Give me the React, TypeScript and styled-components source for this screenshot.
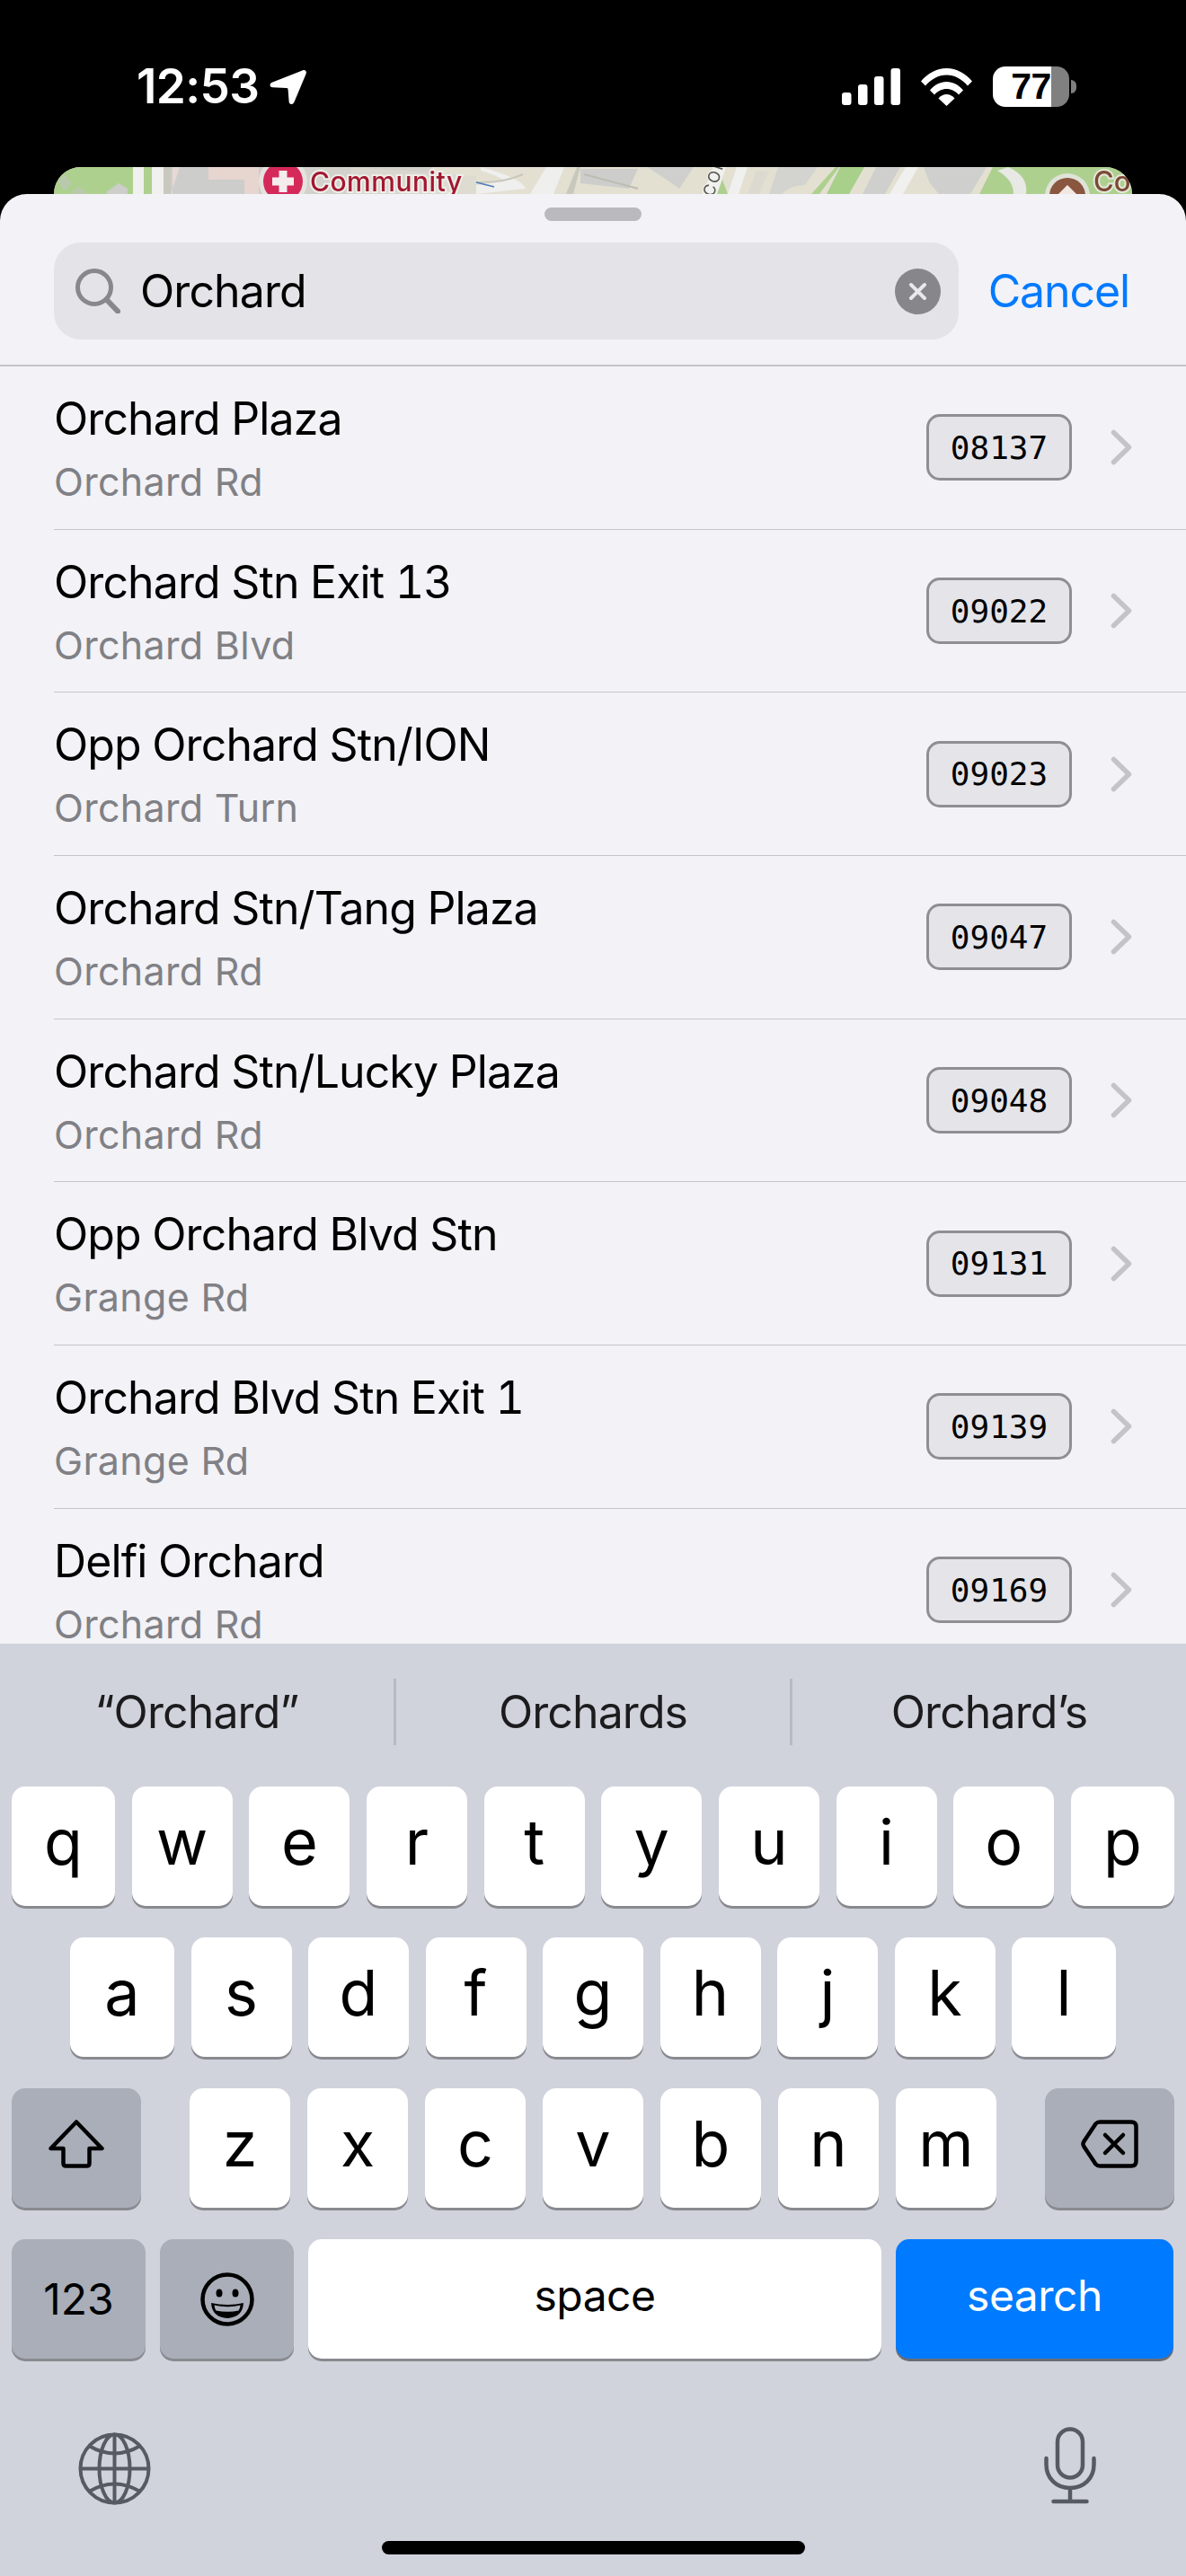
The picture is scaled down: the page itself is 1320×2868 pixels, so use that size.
import React from 'react'
import styled, { createGlobalStyle } from 'styled-components'

const GlobalStyle = createGlobalStyle`
  html, body {
    margin: 0;
    padding: 0;
    background: #000;
  }
  * {
    box-sizing: border-box;
  }
`

const FONT = `Inter, "Noto Sans", sans-serif`

const Page = styled.div`
  width: 1320px;
  height: 2868px;
  background: #000;
  display: flex;
  flex-direction: column;
  overflow: hidden;
  font-family: ${FONT};
`

/* status bar */
const StatusBar = styled.div`
  height: 186px;
  flex: none;
  display: flex;
  justify-content: space-between;
  align-items: flex-start;
  padding: 74px 130px 0 152px;
  color: #fff;
`

const TimeGroup = styled.div`
  display: flex;
  align-items: center;
  gap: 12px;
  height: 45px;
`

const Time = styled.span`
  font-size: 53px;
  line-height: 45px;
  font-weight: 600;
  letter-spacing: -0.6px;
`

const StatusIcons = styled.div`
  display: flex;
  align-items: center;
  gap: 23px;
  height: 45px;
`

const Battery = styled.div`
  position: relative;
  width: 85px;
  height: 45px;
  border-radius: 14px;
  background: linear-gradient(90deg, #fff 0, #fff 65px, #808080 65px);
  color: #000;
  display: flex;
  align-items: center;
  justify-content: center;
  font-family: 'Liberation Sans', sans-serif;
  font-size: 41px;
  font-weight: 700;
  letter-spacing: -0.5px;

  &::after {
    content: '';
    position: absolute;
    right: -8px;
    top: 15px;
    width: 6px;
    height: 15px;
    background: #808080;
    border-radius: 0 8px 8px 0;
  }
`

/* map card peeking from behind the sheet */
const MapPeek = styled.div`
  height: 30px;
  flex: none;
  margin: 0 60px;
  border-radius: 30px 30px 0 0;
  overflow: hidden;
  background: #e3e0d2;

  svg {
    display: block;
    filter: blur(0.5px);
  }
`

/* sheet */
const Sheet = styled.div`
  flex: 1;
  min-height: 0;
  display: flex;
  flex-direction: column;
  background: #f2f2f7;
  border-radius: 30px 30px 0 0;
  overflow: hidden;
`

const SheetHeader = styled.div`
  height: 192px;
  flex: none;
  display: flex;
  flex-direction: column;
  align-items: center;
  padding-top: 15px;
  border-bottom: 2px solid #c4c4c8;
`

const Handle = styled.div`
  width: 108px;
  height: 15px;
  border-radius: 8px;
  background: #b9b9be;
`

const SearchRow = styled.div`
  width: 100%;
  display: flex;
  align-items: center;
  padding: 24px 63px 0 60px;
  justify-content: space-between;
`

const SearchField = styled.div`
  width: 1007px;
  height: 108px;
  border-radius: 30px;
  background: #e3e3e8;
  display: flex;
  align-items: center;
  padding: 0 20px 0 24px;
  gap: 22px;
`

const SearchText = styled.div`
  flex: 1;
  font-size: 50px;
  letter-spacing: -0.9px;
  color: #000;
`

const ClearButton = styled.div`
  width: 51px;
  height: 51px;
  border-radius: 50%;
  background: #86868b;
  display: flex;
  align-items: center;
  justify-content: center;
`

const CancelLabel = styled.div`
  font-size: 50px;
  letter-spacing: -1.1px;
  color: #007aff;
`

const StopList = styled.div`
  flex: 1;
  min-height: 0;
  overflow: hidden;
`

const Row = styled.div`
  height: 181.7px;
  margin-left: 60px;
  padding-right: 60px;
  display: flex;
  align-items: center;
  border-bottom: 1.5px solid #c6c6ca;
`

const RowText = styled.div`
  flex: 1;
  min-width: 0;
`

const Title = styled.div`
  font-size: 50px;
  line-height: 60px;
  letter-spacing: -0.9px;
  font-feature-settings: 'tnum';
  color: #000;
`

const Subtitle = styled.div`
  margin-top: 15px;
  font-size: 43px;
  line-height: 50px;
  letter-spacing: 0.3px;
  color: #808085;
`

const CodeBadge = styled.div`
  width: 162px;
  height: 74px;
  border: 3px solid #8e8e93;
  border-radius: 15px;
  background: #e4e4e9;
  display: flex;
  align-items: center;
  justify-content: center;
  font-family: 'DejaVu Sans Mono', monospace;
  font-size: 36px;
  color: #000;
  margin-right: 43px;
`

/* keyboard */
const Keyboard = styled.div`
  height: 1038px;
  flex: none;
  background: #d0d3dc;
  display: flex;
  flex-direction: column;
`

const Suggestions = styled.div`
  height: 159px;
  flex: none;
  display: flex;
  align-items: flex-start;
  padding-top: 39px;
`

const Suggestion = styled.div`
  flex: 1;
  height: 74px;
  display: flex;
  align-items: center;
  justify-content: center;
  font-size: 50px;
  letter-spacing: -0.9px;
  color: #1c1c1e;
`

const SuggestionDivider = styled.div`
  width: 3px;
  height: 74px;
  background: #b8bac1;
`

const KeyRows = styled.div`
  display: flex;
  flex-direction: column;
  gap: 35px;
`

const KeyRow = styled.div<{ $inset: number }>`
  display: flex;
  justify-content: space-between;
  padding: 0 ${({ $inset }) => $inset}px;
  height: 133px;
`

const KeyGroup = styled.div`
  display: flex;
  gap: 19px;
`

const BottomKeys = styled.div`
  display: flex;
  gap: 16px;
  padding: 0 13px;
  height: 133px;
`

type KeyTone = 'letter' | 'special' | 'action'

const toneBackground: Record<KeyTone, string> = {
  letter: '#fff',
  special: '#a9aeb9',
  action: '#007aff',
}

const Key = styled.div<{ $width?: number; $tone?: KeyTone; $small?: boolean }>`
  width: ${({ $width }) => $width ?? 112}px;
  height: 133px;
  flex: none;
  border-radius: 15px;
  background: ${({ $tone }) => toneBackground[$tone ?? 'letter']};
  box-shadow: 0 3px 0 ${({ $tone }) => ($tone === 'action' ? '#6c6d74' : '#898a8f')};
  color: ${({ $tone }) => ($tone === 'action' ? '#fff' : '#000')};
  display: flex;
  align-items: center;
  justify-content: center;
  font-size: ${({ $small }) => ($small ? 48 : 70)}px;
  padding-bottom: ${({ $small }) => ($small ? 0 : 10)}px;
`

const KeyLabel = styled.span`
  display: block;
  margin-top: -9px;
  letter-spacing: -0.5px;
`

const SystemRow = styled.div`
  display: flex;
  justify-content: space-between;
  align-items: flex-start;
  padding: 76px 100px 0 87px;
  height: 203px;
`

const GlobeSlot = styled.div`
  padding-top: 6px;
`

const HomeBar = styled.div`
  width: 471px;
  height: 15px;
  margin: 0 auto;
  border-radius: 8px;
  background: #000;
`

/* drawings */
const SignalIcon = () => (
  <svg width="65" height="41" viewBox="0 0 65 41" fill="#fff">
    <rect x="0" y="27" width="10.5" height="14" rx="3" />
    <rect x="18" y="18" width="10.5" height="23" rx="3" />
    <rect x="36" y="9" width="10.5" height="32" rx="3" />
    <rect x="54.5" y="0" width="10.5" height="41" rx="3" />
  </svg>
)

const WifiIcon = () => (
  <svg width="57" height="42" viewBox="0 0 57 42" fill="#fff">
    <path d="M0 14.5C7.5 5.5 17.5 0 28.5 0S49.5 5.5 57 14.5L52 19.5C45.5 12 37.5 7.5 28.5 7.5S11.5 12 5 19.5Z" />
    <path d="M10 24.5C15 18.5 21.5 15 28.5 15S42 18.5 47 24.5L42 29.5C38.5 25.5 33.5 23 28.5 23S18.5 25.5 15 29.5Z" />
    <path d="M19.5 33.5C22 30.5 25 29 28.5 29S35 30.5 37.5 33.5L28.5 42Z" />
  </svg>
)

const LocationIcon = () => (
  <svg width="42" height="40" viewBox="0 0 42 40" fill="#fff">
    <path d="M36.5 1.5C39.5 0 41.8 2.3 40.5 5.5L27.5 36.5C26 40 21.8 40 21.6 36L20.6 22.8C20.5 21.5 20 21 18.6 21L3.5 20.2C0 20 -.5 16.2 2.8 14.8Z" />
  </svg>
)

const SearchGlyph = () => (
  <svg width="50" height="50" viewBox="0 0 50 50" fill="none" stroke="#87878c" strokeWidth="5" strokeLinecap="round">
    <circle cx="21" cy="21" r="18.5" />
    <path d="M34.5 34.5L47 47.5" strokeWidth="6" />
  </svg>
)

const ClearGlyph = () => (
  <svg width="21" height="21" viewBox="0 0 21 21" fill="none" stroke="#e9e9ed" strokeWidth="4" strokeLinecap="round">
    <path d="M3 3L18 18M18 3L3 18" />
  </svg>
)

const Chevron = () => (
  <svg width="24" height="40" viewBox="0 0 24 40" fill="none" stroke="#c4c4c8" strokeWidth="5.5" strokeLinecap="round" strokeLinejoin="round">
    <path d="M3.5 3.5L20.5 20L3.5 36.5" />
  </svg>
)

const ShiftIcon = () => (
  <svg width="62" height="54" viewBox="0 0 62 54" fill="none" stroke="#000" strokeWidth="4.5" strokeLinejoin="round">
    <path d="M31 2.5L59.5 32H45.5V48.5Q45.5 51.5 42.5 51.5H19.5Q16.5 51.5 16.5 48.5V32H2.5Z" />
  </svg>
)

const BackspaceIcon = () => (
  <svg width="64" height="54" viewBox="0 0 64 54" fill="none" stroke="#000" strokeWidth="4.5" strokeLinejoin="round" strokeLinecap="round">
    <path d="M21 2.5H56Q61.5 2.5 61.5 8V46Q61.5 51.5 56 51.5H21Q18.5 51.5 16.5 49.5L3.5 30Q1.5 27 3.5 24L16.5 4.5Q18.5 2.5 21 2.5Z" />
    <path d="M27 17L47 37M47 17L27 37" />
  </svg>
)

const EmojiIcon = () => (
  <svg width="60" height="60" viewBox="0 0 60 60">
    <circle cx="30" cy="30" r="27.5" fill="none" stroke="#000" strokeWidth="4.5" />
    <ellipse cx="21" cy="23" rx="3.5" ry="4.5" fill="#000" />
    <ellipse cx="39" cy="23" rx="3.5" ry="4.5" fill="#000" />
    <path d="M12 34Q30 38 48 34Q47 50 30 51Q13 50 12 34Z" fill="#000" />
    <path d="M15.5 36.5Q30 40 44.5 36.5Q44 41 42.5 42.5Q30 45 17.5 42.5Q16 41 15.5 36.5Z" fill="#a9aeb9" />
  </svg>
)

const GlobeIcon = () => (
  <svg width="81" height="81" viewBox="0 0 81 81" fill="none" stroke="#565a63" strokeWidth="4">
    <circle cx="40.5" cy="40.5" r="38" />
    <ellipse cx="40.5" cy="40.5" rx="17" ry="38" />
    <path d="M40.5 2.5V78.5M2.5 40.5H78.5" />
    <path d="M12 15Q40.5 32 69 15M12 66Q40.5 49 69 66" />
  </svg>
)

const MicIcon = () => (
  <svg width="58" height="86" viewBox="0 0 58 86" fill="none" stroke="#565a63" strokeWidth="4.5" strokeLinecap="round">
    <rect x="15" y="2.5" width="28" height="54" rx="14" />
    <path d="M2.5 35V42C2.5 57 13.5 68 29 68S55.5 57 55.5 42V35" />
    <path d="M29 68V83M10.5 83H47.5" />
  </svg>
)

const MapDrawing = () => (
  <svg width="1200" height="30" viewBox="0 0 1200 30">
    <rect width="1200" height="30" fill="#e3e0d2" />
    {/* left park and roads */}
    <path d="M0 30V12Q4 0 24 0H88V30Z" fill="#aed08f" />
    <path d="M4 16L12 9L20 18L12 26Z" fill="#b9c9ae" />
    <path d="M20 27L28 22L36 28V30H22Z" fill="#b9c9ae" />
    <path d="M58 28L72 18L82 24V30H60Z" fill="#cdcdc9" />
    <rect x="88" width="12" height="30" fill="#f0f0ee" />
    <rect x="100" width="9" height="30" fill="#aed08f" />
    <rect x="109" width="13" height="30" fill="#f0f0ee" />
    <rect x="122" width="8" height="30" fill="#c9c8be" />
    {/* buildings */}
    <rect x="130" width="120" height="30" fill="#cdcdcc" />
    <path d="M130 30L140 0H132V30Z" fill="#e8d9d2" />
    <path d="M172 0H228V30H212V14H172Z" fill="#e7d5d0" />
    <path d="M250 0H420V30H250Z" fill="#d2d1cb" />
    <path d="M330 0L470 10V30H330Z" fill="#dcdad0" opacity="0.7" />
    <path d="M475 0Q520 12 525 24L470 30V20Q490 18 500 14Q490 8 475 4Z" fill="#efefee" />
    <path d="M470 17Q500 18 522 8" stroke="#c9c8bd" strokeWidth="2" fill="none" />
    <path d="M470 17L490 22" stroke="#4e79b8" strokeWidth="1.5" />
    <path d="M530 30L548 0H568L556 30Z" fill="#efefee" />
    <path d="M570 30L582 0H586L578 30Z" fill="#c9c8bd" />
    <path d="M586 2H650L640 24L586 18Z" fill="#cdcdcc" />
    <path d="M590 8L650 24" stroke="#bdbdb3" strokeWidth="2" />
    <path d="M660 0H712L696 24L676 10Z" fill="#cfcfcd" />
    <path d="M722 30L734 0H748L738 30Z" fill="#f0f0ee" />
    <path d="M738 30L744 14L750 30Z" fill="#aed08f" />
    <path d="M750 30L760 0H772L762 30Z" fill="#f0f0ee" />
    <path d="M772 30L782 4H796L785 30Z" fill="#dcdad0" />
    <path d="M796 30L806 0H850L836 20Q820 20 810 30Z" fill="#d3d3d0" />
    <path d="M843 30L870 0H874L852 30Z" fill="#aed08f" />
    <path d="M860 30L875 0H902L885 30Z" fill="#a9d08b" />
    <path d="M900 30L915 0H942L925 30Z" fill="#cfcfcd" />
    <path d="M930 30L948 0H962L945 30Z" fill="#f0f0ee" />
    <path d="M962 10L985 30H950L958 18Z" fill="#e3e0d2" />
    <path d="M968 0H1038L1020 30H985L975 18Z" fill="#cfcfcd" />
    <path d="M1030 30L1045 0H1200V30Z" fill="#aed08f" />
    <path d="M1062 0Q1085 10 1082 30H1068Q1068 14 1050 4Z" fill="#e8e8e4" />
    {/* poi markers */}
    <circle cx="255" cy="16" r="27" fill="#e6e2de" />
    <circle cx="255" cy="16" r="22" fill="#d5295a" />
    <path d="M250.5 4H259.5V11.5H267V20.5H259.5V28H250.5V20.5H243V11.5H250.5Z" fill="#f5ecee" />
    <text x="285" y="27" fontFamily="Inter, sans-serif" fontSize="30" fontWeight="500" fill="#a3172f" stroke="#eeeeea" strokeWidth="4" paintOrder="stroke" letterSpacing="0.5">Community</text>
    <text transform="translate(734 34) rotate(-72)" fontFamily="Inter, sans-serif" fontSize="18" fill="#55554f" stroke="#f0f0ee" strokeWidth="2" paintOrder="stroke" letterSpacing="2">CON</text>
    <circle cx="1128" cy="32" r="25" fill="#dfe3d8" />
    <circle cx="1128" cy="32" r="20" fill="#8a563f" />
    <path d="M1118 30L1128 20L1138 30Z" fill="#f1e8e2" />
    <text x="1157" y="27" fontFamily="Inter, sans-serif" fontSize="31" fontWeight="500" fill="#7b4a34" stroke="#e4e8dc" strokeWidth="4" paintOrder="stroke">Co</text>
  </svg>
)

const stops = [
  { name: 'Orchard Plaza', road: 'Orchard Rd', code: '08137' },
  { name: 'Orchard Stn Exit 13', road: 'Orchard Blvd', code: '09022' },
  { name: 'Opp Orchard Stn/ION', road: 'Orchard Turn', code: '09023' },
  { name: 'Orchard Stn/Tang Plaza', road: 'Orchard Rd', code: '09047' },
  { name: 'Orchard Stn/Lucky Plaza', road: 'Orchard Rd', code: '09048' },
  { name: 'Opp Orchard Blvd Stn', road: 'Grange Rd', code: '09131' },
  { name: 'Orchard Blvd Stn Exit 1', road: 'Grange Rd', code: '09139' },
  { name: 'Delfi Orchard', road: 'Orchard Rd', code: '09169' },
]

const LetterKeys = ({ letters }: { letters: string }) => (
  <>
    {letters.split('').map((letter) => (
      <Key key={letter}>{letter}</Key>
    ))}
  </>
)

const App = () => (
  <Page>
    <GlobalStyle />
    <StatusBar>
      <TimeGroup>
        <Time>12:53</Time>
        <LocationIcon />
      </TimeGroup>
      <StatusIcons>
        <SignalIcon />
        <WifiIcon />
        <Battery>77</Battery>
      </StatusIcons>
    </StatusBar>
    <MapPeek>
      <MapDrawing />
    </MapPeek>
    <Sheet>
      <SheetHeader>
        <Handle />
        <SearchRow>
          <SearchField>
            <SearchGlyph />
            <SearchText>Orchard</SearchText>
            <ClearButton>
              <ClearGlyph />
            </ClearButton>
          </SearchField>
          <CancelLabel>Cancel</CancelLabel>
        </SearchRow>
      </SheetHeader>
      <StopList>
        {stops.map((stop) => (
          <Row key={stop.code}>
            <RowText>
              <Title>{stop.name}</Title>
              <Subtitle>{stop.road}</Subtitle>
            </RowText>
            <CodeBadge>{stop.code}</CodeBadge>
            <Chevron />
          </Row>
        ))}
      </StopList>
      <Keyboard>
        <Suggestions>
          <Suggestion>“Orchard”</Suggestion>
          <SuggestionDivider />
          <Suggestion>Orchards</Suggestion>
          <SuggestionDivider />
          <Suggestion>Orchard’s</Suggestion>
        </Suggestions>
        <KeyRows>
          <KeyRow $inset={13}>
            <Key $width={115}>q</Key>
            <LetterKeys letters="wertyuio" />
            <Key $width={115}>p</Key>
          </KeyRow>
          <KeyRow $inset={78}>
            <Key $width={116}>a</Key>
            <LetterKeys letters="sdfghjk" />
            <Key $width={116}>l</Key>
          </KeyRow>
          <KeyRow $inset={13}>
            <Key $width={144} $tone="special">
              <ShiftIcon />
            </Key>
            <KeyGroup>
              <LetterKeys letters="zxcvbnm" />
            </KeyGroup>
            <Key $width={144} $tone="special">
              <BackspaceIcon />
            </Key>
          </KeyRow>
          <BottomKeys>
            <Key $width={149} $tone="special" $small>123</Key>
            <Key $width={149} $tone="special" $small>
              <EmojiIcon />
            </Key>
            <Key $width={638} $small>
              <KeyLabel>space</KeyLabel>
            </Key>
            <Key $width={309} $tone="action" $small>
              <KeyLabel>search</KeyLabel>
            </Key>
          </BottomKeys>
        </KeyRows>
        <SystemRow>
          <GlobeSlot>
            <GlobeIcon />
          </GlobeSlot>
          <MicIcon />
        </SystemRow>
        <HomeBar />
      </Keyboard>
    </Sheet>
  </Page>
)

export default App
